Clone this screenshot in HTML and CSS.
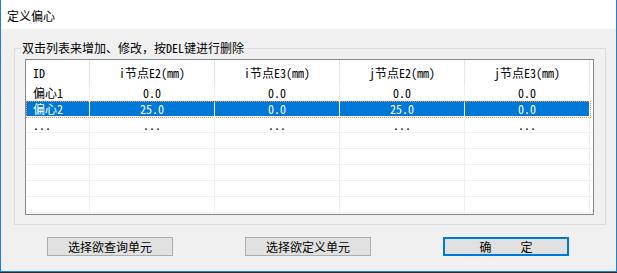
FILE: index.html
```html
<!DOCTYPE html>
<html lang="zh-CN">
    <head>
        <meta charset="utf-8">
        <link rel="stylesheet" href="styles.css">
        <title>定义偏心</title>
    </head>

    <body>
        <div class="dialog">
            <!-- caption -->
            <div class="titlebar">定义偏心</div>

            <div class="client">
                <fieldset class="group">
                    <legend>双击列表来增加、修改，按DEL键进行删除</legend>

                    <div class="listview">
                        <div class="head">
                            <div class="cell id">ID</div>
                            <div class="cell">i节点E2(mm)</div>
                            <div class="cell">i节点E3(mm)</div>
                            <div class="cell">j节点E2(mm)</div>
                            <div class="cell">j节点E3(mm)</div>
                            <div class="filler"></div>
                        </div>
                        <div class="row">
                            <div class="cell id">偏心1</div>
                            <div class="cell">0.0</div>
                            <div class="cell">0.0</div>
                            <div class="cell">0.0</div>
                            <div class="cell">0.0</div>
                        </div>
                        <div class="row sel">
                            <div class="cell id">偏心2</div>
                            <div class="cell">25.0</div>
                            <div class="cell">0.0</div>
                            <div class="cell">25.0</div>
                            <div class="cell">0.0</div>
                        </div>
                        <div class="row">
                            <div class="cell id">...</div>
                            <div class="cell">...</div>
                            <div class="cell">...</div>
                            <div class="cell">...</div>
                            <div class="cell">...</div>
                        </div>
                        <div class="row"><div class="cell"></div><div class="cell"></div><div class="cell"></div><div class="cell"></div><div class="cell"></div></div>
                        <div class="row"><div class="cell"></div><div class="cell"></div><div class="cell"></div><div class="cell"></div><div class="cell"></div></div>
                        <div class="row"><div class="cell"></div><div class="cell"></div><div class="cell"></div><div class="cell"></div><div class="cell"></div></div>
                        <div class="row"><div class="cell"></div><div class="cell"></div><div class="cell"></div><div class="cell"></div><div class="cell"></div></div>
                        <div class="row"><div class="cell"></div><div class="cell"></div><div class="cell"></div><div class="cell"></div><div class="cell"></div></div>
                    </div>
                </fieldset>

                <div class="buttons">
                    <button type="button">选择欲查询单元</button>
                    <button type="button">选择欲定义单元</button>
                    <button type="button" class="ok"><span>确</span><span>定</span></button>
                </div>
            </div>
        </div>
    </body>
</html>
```

FILE: styles.css
```css
* {
    box-sizing: border-box;
    margin: 0;
    padding: 0;
}
html,
body {
    width: 617px;
    height: 273px;
    overflow: hidden;
    background: #2b2b2b;
}
body {
    font-family: 'Noto Sans CJK SC', sans-serif;
    font-size: 12px;
    color: #000;
}
.dialog {
    width: 617px;
    height: 272px;
    display: flex;
    flex-direction: column;
    background: #f0f0f0;
    border: 1px solid #1883d7;
    border-top: 0;
}
.titlebar {
    height: 29px;
    padding-left: 6px;
    line-height: 31px;
    background: #fff;
}
.client {
    flex: 1;
    padding: 12px 0 0 13px;
}

/* group box */
.group {
    width: 592px;
    padding: 0 0 9px 0;
    border: 1px solid #dcdcdc;
    font-family: 'Noto Sans Mono CJK SC', 'Noto Sans CJK SC', monospace;
}
.group legend {
    margin-left: 6px;
    padding: 0 1px;
    line-height: 14px;
}

/* list view */
.listview {
    width: 569px;
    height: 156px;
    margin: 4px 0 0 10px;
    background: #fff;
    border: 1px solid #828790;
}
.head,
.row {
    display: flex;
}
.head {
    height: 25px;
    line-height: 25px;
}
.row {
    position: relative;
    height: 16px;
    line-height: 15px;
    border-bottom: 1px solid #f0f0f0;
}
.cell {
    width: 125px;
    text-align: center;
    white-space: nowrap;
    border-right: 1px solid #f0f0f0;
}
.head .cell {
    border-right-color: #e5e5e5;
}
.cell.id,
.cell:first-child {
    width: 64px;
    padding-left: 7px;
    text-align: left;
}
.filler {
    flex: 1;
}
.row.sel .cell {
    background: #0078d7;
    color: #fff;
    border-right-color: #fff;
}
.row.sel::after {
    content: '';
    position: absolute;
    left: 0;
    top: 0;
    width: 563px;
    height: 15px;
    border: 1px dotted #f29c38;
}

/* buttons */
.buttons {
    display: flex;
    gap: 72px;
    margin: 12px 0 0 33px;
}
.buttons button {
    width: 126px;
    height: 19px;
    font-family: 'Noto Sans CJK SC', sans-serif;
    font-size: 12px;
    line-height: 17px;
    color: #000;
    background: #e1e1e1;
    border: 1px solid #adadad;
}
.buttons button.ok {
    display: flex;
    justify-content: center;
    align-items: center;
    gap: 29px;
    border: 2px solid #0078d7;
}
```
